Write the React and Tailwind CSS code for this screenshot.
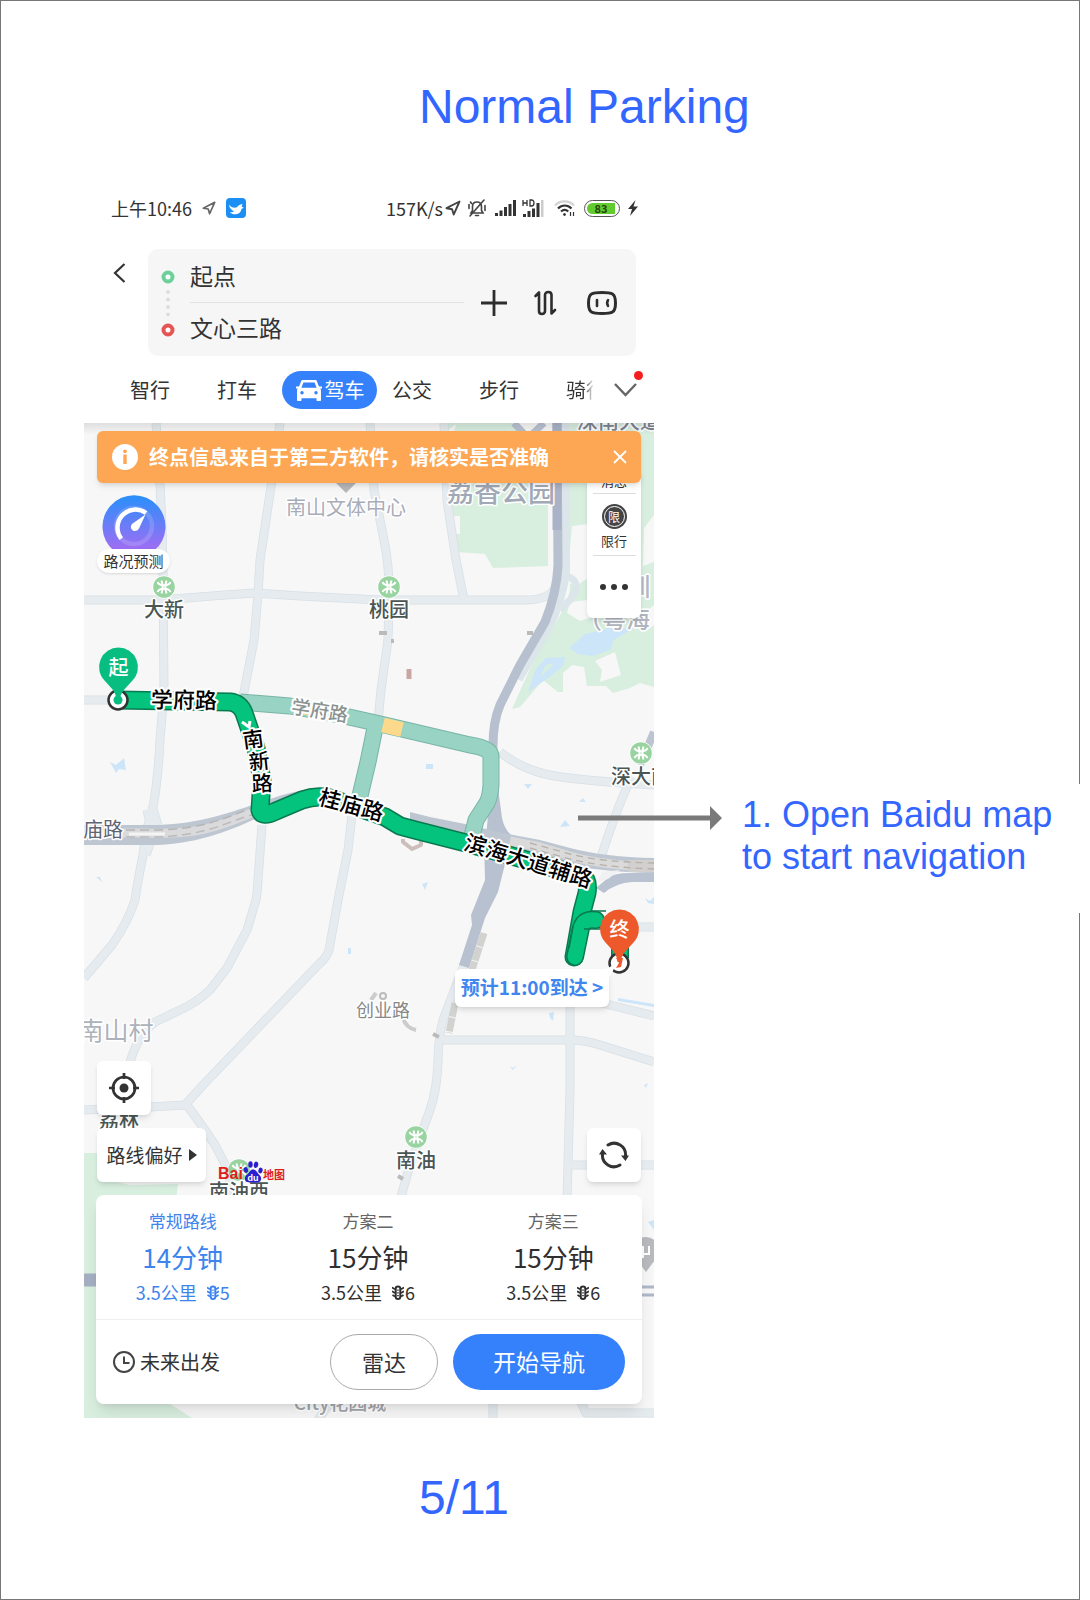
import React from "react";

const CJK = "font-['Noto_Sans_CJK_SC',sans-serif]";

function LocationArrow({ className, color = "#444" }) {
  return (
    <svg className={className} viewBox="0 0 16 16" fill="none" stroke={color} strokeWidth="1.9" strokeLinejoin="round" aria-hidden="true">
      <path d="M14.500 1.500 1.500 8.200l5.600 1 1.600 5.400z" />
    </svg>
  );
}

function StatusBar() {
  return (
    <div className="flex h-9 items-center pl-[27px] pr-4 text-[18px] leading-6 text-[#333]">
      <span>上午10:46</span>
      <LocationArrow className="ml-2.5 h-3.5 w-3.5" color="#666" />
      <svg className="ml-2.5 h-5 w-5" viewBox="0 0 20 20" aria-hidden="true">
        <rect width="20" height="20" rx="4" fill="#1c8ff5" />
        <path d="M3 6.500c2.200 3 5 4 8 2.800.8-1.500 2.500-2.600 5.500-3.300-.5 1.200-.6 2-.8 3 .9.200 1.300.2 2 .1-.6 1-1.300 1.500-2.200 1.900C15 14.500 12.500 16.300 9 16.300c-2.200 0-4-.8-5-2.300 1.600.3 2.800.1 4-.7C5.500 12.300 3.300 10 3 6.500z" fill="#fff" />
      </svg>
      <span className="ml-auto">157K/s</span>
      <LocationArrow className="ml-0.5 h-4 w-4" />
      <svg className="ml-1.5 h-5 w-5" viewBox="0 0 20 20" fill="none" stroke="#444" strokeWidth="1.600" strokeLinecap="round" aria-hidden="true">
        <path d="M4 15h12l-1.500-2.500V8.500C14.500 5.500 12.700 4 10 4S5.500 5.500 5.500 8.500v4zM8.500 17.500h3M17 2 3 18M2 6.500v4M18 7.500v5M3.500 4l1 1.500" />
      </svg>
      <svg className="ml-2 h-4 w-[21px]" viewBox="0 0 21 16" fill="#333" aria-hidden="true">
        <path d="M0 13h3v3H0zM4.500 10.500h3V16h-3zM9 7h3v9H9zM13.500 4h3v12h-3zM18 0h3v16h-3z" />
      </svg>
      <svg className="ml-1.5 h-[18px] w-[22px]" viewBox="0 0 22 18" fill="#333" aria-hidden="true">
        <path d="M1 15h3v3H1zM5.500 12h3v6h-3zM10 9.500h3V18h-3zM14.500 4h3v14h-3z" />
        <path d="M19 1h2.500v17H19z" fill="#ccc" />
        <path d="M1 1v6M5 1v6M1 4h4M8 1v6h1.500c3.300 0 3.300-6 0-6z" fill="none" stroke="#333" strokeWidth="1.300" />
      </svg>
      <svg className="ml-2.5 h-[18px] w-[22px]" viewBox="0 0 22 18" fill="none" stroke="#333" strokeWidth="2.200" aria-hidden="true">
        <path d="M1 6.500C6 1 15 1 20 6.500" stroke="#d3d3d3" />
        <path d="M4 9.500c4-4 9.500-4 13.500 0M7 12.500c2.300-2 5-2 7.300 0" />
        <circle cx="10.500" cy="15.500" r="1" fill="#333" strokeWidth="1" />
        <path d="M16.500 13v4M19.500 13v4" strokeWidth="1.200" />
      </svg>
      <div className="ml-2 flex h-[17px] w-9 items-center rounded-full border-[1.5px] border-[#555] p-0.5">
        <div className="h-full w-[28px] rounded-l-full rounded-r-sm bg-[#62cb2f] text-center text-[11px] font-bold leading-[10px] text-[#25470f]">83</div>
      </div>
      <svg className="ml-2 h-4 w-2.5" viewBox="0 0 10 16" fill="#333" aria-hidden="true">
        <path d="M7.500 0 0 9h4l-2 7 8-9.500H5.500z" />
      </svg>
    </div>
  );
}

function SearchBox() {
  return (
    <div className="mt-[23px] flex pl-[27px] pr-[18px]">
      <button aria-label="返回" className="mt-[14px] h-5 w-[18px]">
        <svg viewBox="0 0 18 20" className="h-full w-full" fill="none" stroke="#333" strokeWidth="2.200" aria-hidden="true">
          <path d="M13.500 1 4 10l9.500 9" />
        </svg>
      </button>
      <div className="ml-[19px] flex h-[107px] flex-1 items-center rounded-[10px] bg-[#f6f6f6] pl-[13px] pr-[18px]">
        <svg viewBox="0 0 14 70" className="h-[70px] w-3.5" fill="none" aria-hidden="true">
          <circle cx="7" cy="9" r="4.500" stroke="#6dd09a" strokeWidth="4" fill="#fff" />
          <g fill="#dcdcdc">
            <circle cx="7" cy="24" r="1.900" />
            <circle cx="7" cy="31.500" r="1.900" />
            <circle cx="7" cy="39" r="1.900" />
            <circle cx="7" cy="46.500" r="1.900" />
          </g>
          <circle cx="7" cy="62" r="4.500" stroke="#e65554" strokeWidth="4" fill="#fff" />
        </svg>
        <div className="ml-[15px] min-w-0 flex-1 text-[#333]">
          <input aria-label="起点" defaultValue="起点" className="block h-[52px] w-full border-b border-[#e2e2e2] bg-transparent pb-0.5 text-[23px] leading-8 outline-none" />
          <input aria-label="终点" defaultValue="文心三路" className="block h-[52px] w-full bg-transparent pb-1 text-[23px] leading-8 outline-none" />
        </div>
        <div className="ml-[17px] flex items-center">
          <button aria-label="添加途经点" className="h-[26px] w-[26px]">
            <svg viewBox="0 0 26 26" stroke="#2d2d2d" strokeWidth="2.800" aria-hidden="true"><path d="M13 0v26M0 13h26" /></svg>
          </button>
          <button aria-label="交换起终点" className="ml-[26px] h-[26px] w-[25px]">
            <svg viewBox="0 0 25 26" fill="none" stroke="#2d2d2d" strokeWidth="2.600" strokeLinecap="round" strokeLinejoin="round" aria-hidden="true">
              <path d="M2.500 6 6 2.500v18.500c0 4 6 4 6 0V5c0-4 6.500-4 6.500 0v18.500l3.500-3.500" />
            </svg>
          </button>
          <button aria-label="语音助手" className="ml-7 h-[26px] w-[32px]">
            <svg viewBox="0 0 32 26" fill="none" stroke="#2d2d2d" strokeLinecap="round" strokeLinejoin="round" aria-hidden="true">
              <path d="M16 2.500c-5 0-8.500.3-10.500 1.500C3 5.500 2.500 8.500 2.500 13S3 20.500 5.500 22c2 1.200 5.500 1.500 10.500 1.500s8.500-.3 10.500-1.500c2.500-1.500 3-4.500 3-9s-.5-7.500-3-9c-2-1.200-5.500-1.500-10.500-1.500z" strokeWidth="3" />
              <path d="M11 10v6M22 10.200Q20.300 13 22 15.800" strokeWidth="2.600" />
            </svg>
          </button>
        </div>
      </div>
    </div>
  );
}

function ModeTabs() {
  return (
    <nav aria-label="出行方式" className="mt-[14px] flex h-[38px] items-center pl-[46px] pt-px text-[20px] leading-7 text-[#333]">
      <button className="w-10 whitespace-nowrap">智行</button>
      <button className="ml-[47px] w-10 whitespace-nowrap">打车</button>
      <button className="ml-[25px] flex h-[38px] w-[95px] items-center justify-center gap-0.5 rounded-full bg-[#3581fb] text-white">
        <svg viewBox="0 0 28 24" className="h-6 w-7" aria-hidden="true">
          <path d="M7.500 3.200h13L23.500 11h-19z" fill="none" stroke="#fff" strokeWidth="2.600" strokeLinejoin="round" />
          <path d="M1 8.500h4.500v2H1zM22.500 8.500H27v2h-4.500zM4.500 10h19c1.700 0 2.500 1 2.500 2.500V22c0 .6-.4 1-1 1h-2.500c-.6 0-1-.4-1-1v-1.800h-15V22c0 .6-.4 1-1 1H3c-.6 0-1-.4-1-1v-9.500C2 11 2.800 10 4.500 10z" fill="#fff" />
          <circle cx="7" cy="14.800" r="1.700" fill="#3581fb" />
          <circle cx="21" cy="14.800" r="1.700" fill="#3581fb" />
        </svg>
        <span>驾车</span>
      </button>
      <button className="ml-[15px] w-10 whitespace-nowrap">公交</button>
      <button className="ml-[47px] w-10 whitespace-nowrap">步行</button>
      <button className="ml-[47px] w-7 overflow-hidden whitespace-nowrap bg-linear-to-r from-[#333] from-60% to-white bg-clip-text text-left text-transparent">骑行</button>
      <button aria-label="更多出行方式" className="relative ml-5 h-4 w-[23px]">
        <svg viewBox="0 0 23 16" fill="none" stroke="#666" strokeWidth="2.400" aria-hidden="true"><path d="m1 2 10.500 11L22 2" /></svg>
        <span className="absolute -right-1.5 -top-[11px] h-[9px] w-[9px] rounded-full bg-[#f51d1d]" />
      </button>
    </nav>
  );
}

function Metro({ x, y }) {
  return (
    <g transform={`translate(${x} ${y})`}>
      <circle r="11.500" fill="#fff" />
      <circle r="10.800" fill="#98d3a0" />
      <g fill="none" stroke="#fff" strokeWidth="2">
        <path d="M-6.500-5C-5-1.500-2-1.800 0-1.800S5-1.500 6.500-5M-6.500 5C-5 1.500-2 1.800 0 1.800S5 1.500 6.500 5" />
        <path d="M-2.500-6.500C-1-2-1 2-2.500 6.500M2.500-6.500C1-2 1 2 2.500 6.500" />
      </g>
    </g>
  );
}

function Label({ x, y, size, color = "#4a5654", weight = 500, rotate = 0, halo = 3, children }) {
  return (
    <text
      transform={`translate(${x} ${y - 2}) rotate(${rotate})`}
      fontSize={size}
      fontWeight={weight}
      fill={color}
      stroke="#fff"
      strokeWidth={halo}
      strokeLinejoin="round"
      paintOrder="stroke"
      textAnchor="middle"
      dominantBaseline="central"
    >
      {children}
    </text>
  );
}

const minorRoads = [
  "M156 423C158 450 162 500 163 570L164 690 160 740Q158 780 153 807L146 832 143 855Q138 880 135 900 128 922 112 945L84 978",
  "M84 600 160 600 225 595 255 593 300 596 380 600 520 600Q552 601 556 585",
  "M280 423 272 480 260 560 258 594 254 640 243 697",
  "M262 825 258 880Q257 895 256 900L247 930 227 968 210 990Q196 1003 180 1010L155 1022Q138 1035 130 1062",
  "M370 423 374 490 384 540Q390 570 389 600L388 640 381 690 378 722",
  "M352 815 348 850 338 900 329 950Q327 957 320 963L203 1085 185 1105",
  "M185 1105 150 1107 84 1110M185 1103Q195 1115 215 1145L229 1172 232 1200",
  "M444 423 447 500 456 560 464 600",
  "M84 700H120",
  "M467 957 443 1020Q438 1040 438 1062 437 1090 430 1110L410 1165 400 1200",
  "M440 1040 570 1040Q585 1040 600 1045L654 1062M570 985V1090L567 1200M568 1165H654M590 1000 654 1016",
  "M500 752Q520 768 545 774T654 785M632 777Q620 800 605 845L600 860M630 927H654",
  "M332 1400 318 1420M493 1400V1420M580 1400 586 1413 654 1413",
  "M146 855 153 835 147 810M158 825 152 806",
];

const parks = [
  "M447 423H512L548 445V500 566L493 568 485 554 456 552 449 510z",
  "M565 423H654V687L640 683 630 688 613 693 606 686H587L584 667 572 665 563 673V692H558L543 680 520 707 512 709 537 653 553 627 566 605 570 590z",
  "M84 1153H97L99 1178 130 1185 178 1184 176 1200H120V1400L164 1400 192 1418H84z",
];

const clearings = "M453 516H460V534H453zM572 526 588 524V578L576 586 567 582 569 560zM644 528 654 515V562L643 566zM570 602 588 600 600 615 580 621 567 613zM595 661 615 652 621 675 600 682 602 670zM570 434 585 428 583 438 573 443zM648 610 654 605V625L645 632zM447 431 456 424 452 440z";

const route = "M118 700 230 702Q240 703 244 713L256 748 262 780 260 810Q262 818 276 811L302 800Q316 795 330 798L385 817 400 826 415 830 470 844 582 876Q589 880 587 893L582 912 574 957";
const routeEnd = "M575 957 581 928Q584 918 596 920";
const altRoute = "M240 702 290 706 340 715 376 723 470 745Q492 748 491 758L491 785Q490 800 485 806L476 820 472 836";
const altBranch = "M376 723 368 762 359 800";

function MapCanvas() {
  return (
    <svg className="block h-full w-full" viewBox="84 423 570 995" preserveAspectRatio="xMidYMid slice" role="img" aria-label="路线地图">
      <rect x="84" y="423" width="570" height="995" fill="#f7f7f7" />
      {parks.map((d) => <path key={d} d={d} fill="#d8eedf" />)}
      <path d={clearings} fill="#f7f7f7" />
      <g fill="#cde5f9">
        <path d="M569 648 585 634 603 630 607 628 634 628 614 640 610 650 592 656 578 654z" />
        <path fillRule="evenodd" d="M528 692 535 670 546 658 565 657 563 666 548 678zM540 677 555 663 546 665z" />
        <path d="M110 762 116 765 124 758 126 770 119 769 116 773zM96 877 102 882 100 877zM426 764H433V769H426zM524 784H532L528 789zM579 802 583 798 586 802zM560 827 565 820 570 826zM422 884 428 882 425 890zM645 898 650 901 654 897V904L648 903zM549 1013 554 1012 553 1021 550 1018zM618 998 654 1004V1007L618 1001zM348 948H351V954H348zM509 1066 513 1068 517 1065 513 1070zM644 1085 648 1083 646 1088zM648 1222 654 1220V1230z" />
      </g>
      <g fill="none" strokeLinejoin="round">
        {minorRoads.map((d) => <path key={d} d={d} stroke="#d8e0e6" strokeWidth="9" />)}
        {minorRoads.map((d) => <path key={d} d={d} stroke="#e5ebee" strokeWidth="7.500" />)}
        <path d="M562 423 563 570Q560 600 545 628L516 678" stroke="#dbe5ea" strokeWidth="14" />
        <path d="M563 575Q585 580 570 600L560 610" stroke="#dbe5ea" strokeWidth="7" />
        <path d="M557 423 558 565Q557 592 545 622L520 665 500 705Q493 722 493 745L492 790Q494 820 501 835" stroke="#b6c0cf" strokeWidth="9" />
        <path d="M557 423V530" stroke="#a9b2c6" strokeWidth="9" />
        <path d="M514 423 528 438 544 423" stroke="#b9c2d2" strokeWidth="7" />
      </g>
      <path d="M491 780H497L502 818Q505 832 515 838H486zM484 840H510L505 864 498 892 485 918 469 968 459 965 472 925 471 915 485 880z" fill="#b7c1cf" />
      <path d="M84 825H145C210 826 245 805 290 793L312 788 295 800C260 815 215 845 150 845H84z" fill="#bec6d2" />
      <path d="M410 812 430 817 465 824 503 833 540 840 570 848Q605 857 654 858V873Q600 872 560 863L410 825z" fill="#bec6d2" />
      <path d="M596 888 608 878Q614 873 630 873H654V882H632Q616 883 604 893z" fill="#b9c2d1" />
      <path d="M602 872 620 870 608 879 598 882z" fill="#f0f1f2" />
      <g fill="none" strokeLinejoin="round">
        <path d="M84 833H145C210 836 230 820 262 809" stroke="#dadadc" strokeWidth="9" />
        <path d="M84 837H146C205 838 230 820 252 815" stroke="#bbb" strokeWidth="1.500" strokeDasharray="9 5" />
        <path d="M84 830H146C205 831 230 815 252 808" stroke="#b5b5b5" strokeWidth="1.500" strokeDasharray="9 5" />
        <path d="M129 834H165" stroke="#f4f4f4" strokeWidth="3" />
        <path d="M510 841 540 847 570 856Q600 865 654 867" stroke="#dadada" strokeWidth="9" />
        <path d="M628 866H654" stroke="#d2d0ce" strokeWidth="12" />
        <path d="M530 843 570 854Q600 862 654 863M530 848 570 859Q600 867 654 869" stroke="#b7b0ab" strokeWidth="1.300" strokeDasharray="7 5" />
        <path d="M654 732 640 765" stroke="#bcc4d2" strokeWidth="8" />
        <path d="M84 1280H100" stroke="#a4afc2" strokeWidth="13" />
        <path d="M640 1287H654M640 1295H654" stroke="#aeb8c8" strokeWidth="3" />
        <path d="M484 933 472 970M455 1003 449 1033" stroke="#d2d2d0" strokeWidth="7" strokeDasharray="14 1" />
        <path d="M403 839V842L412 849 421 845V839" stroke="#cdbdbb" strokeWidth="4" />
        <path d="M371 1000 376 993M403 1018Q406 1028 416 1030" stroke="#ccc" strokeWidth="4" />
        <circle cx="383" cy="996" r="3" stroke="#bbb" strokeWidth="2" />
        <path d="M379 633H387M391 641H394M527 633H533M433 1034 439 1037M398 1176 403 1179" stroke="#bbb" strokeWidth="4" />
        <path d="M409 669V679" stroke="#caa6a3" strokeWidth="5" />
      </g>

      <Label x={619} y={421} size={21} color="#7c8491">深南大道</Label>
      <Label x={501} y={492} size={27} color="#a2a9b6">荔香公园</Label>
      <Label x={346} y={508} size={20} color="#a8adb9" weight={400}>南山文体中心</Label>
      <path d="M335 482Q346 482 357 482L346 493z" fill="#b7b7b9" />
      <Label x={638} y={587} size={25} color="#b3b7c2">圳</Label>
      <Label x={614} y={619} size={24} color="#b0b5c0">（粤海</Label>
      <Metro x={164} y={587} />
      <Label x={164} y={610} size={20}>大新</Label>
      <Metro x={389} y={587} />
      <Label x={389} y={610} size={20}>桃园</Label>
      <Metro x={641} y={753} />
      <Label x={641} y={777} size={20}>深大南</Label>
      <Metro x={416} y={1137} />
      <Label x={416} y={1161} size={20}>南油</Label>
      <Metro x={239} y={1170} />
      <Label x={239} y={1192} size={20}>南油西</Label>
      <Label x={119} y={1121} size={20}>荔林</Label>
      <Label x={383} y={1011} size={18} color="#888" weight={400}>创业路</Label>
      <Label x={116} y={1031} size={25} color="#adb2bb" weight={400}>南山村</Label>
      <Label x={103} y={830} size={20} color="#5d6472" weight={400}>庙路</Label>
      <Label x={340} y={1403} size={19} color="#a3a6ac">City花园城</Label>
      <circle cx="646" cy="1250" r="13" fill="#b8babd" />
      <path d="M634 1256 658 1256 646 1272z" fill="#b8babd" />
      <path d="M643 1246V1258M649 1246V1254H643" stroke="#fff" strokeWidth="2" fill="none" />

      <g fill="none" strokeLinejoin="round">
        <path d={altRoute} stroke="#78b5a6" strokeWidth="17" />
        <path d={altBranch} stroke="#78b5a6" strokeWidth="17" />
        <path d={altRoute} stroke="#99d3c4" strokeWidth="15" />
        <path d={altBranch} stroke="#99d3c4" strokeWidth="15" />
        <path d="M383 725 402 729.500" stroke="#fdd98b" strokeWidth="15" />
        <path d="M302 707 318 710" stroke="#fdd98b" strokeWidth="14" />
        <path d={route} stroke="#087a50" strokeWidth="19" strokeLinecap="round" />
        <path d={route} stroke="#04c37c" strokeWidth="16" strokeLinecap="round" />
        <path d={routeEnd} stroke="#087a50" strokeWidth="18" strokeLinecap="round" />
        <path d={routeEnd} stroke="#04c37c" strokeWidth="15" strokeLinecap="round" />
        <path d="M590 911H606M584 929H604M569 948 573 926" stroke="#087a50" strokeWidth="1.500" />
        <path d="M242 722 249 727 250 721" stroke="#fff" strokeWidth="3" />
        <path d="M620 930V958" stroke="#087a50" strokeWidth="18" />
        <path d="M620 930V958" stroke="#04c37c" strokeWidth="15" />
      </g>

      <Label x={184} y={700} size={22} color="#000" rotate={1} halo={4}>学府路</Label>
      <Label x={320} y={711} size={19} color="#8b9391" rotate={9} halo={4}>学府路</Label>
      <Label x={253} y={740} size={21} color="#000" rotate={-8} halo={4}>南</Label>
      <Label x={259} y={762} size={21} color="#000" rotate={-6} halo={4}>新</Label>
      <Label x={262} y={784} size={21} color="#000" rotate={-3} halo={4}>路</Label>
      <Label x={352} y={805} size={22} color="#000" rotate={15} halo={4}>桂庙路</Label>
      <Label x={529} y={861} size={22} color="#000" rotate={17} halo={4}>滨海大道辅路</Label>

      <circle cx="118" cy="700" r="9.500" fill="#fff" stroke="#333" strokeWidth="2.500" />
      <circle cx="118" cy="700" r="4.500" fill="#08bd80" />
      <path d="M118.500 647.500a19.500 19.500 0 0 1 14 33C127 687 121 691 119.500 700h-3C116 691 110 687 104.500 680.500a19.500 19.500 0 0 1 14-33z" fill="#08bd80" />
      <text x="118.500" y="666" fontSize="20" fontWeight="500" fill="#fff" textAnchor="middle" dominantBaseline="central">起</text>
      <circle cx="619" cy="963" r="9.500" fill="#fff" stroke="#333" strokeWidth="2.500" />
      <path d="M616 958H623L621 967 616 968 619 963z" fill="#f0562c" />
      <path d="M619.500 909.500a19.500 19.500 0 0 1 14 33C628 949 622 953 620.500 962h-3C617 953 611 949 605.500 942.500a19.500 19.500 0 0 1 14-33z" fill="#ee592b" />
      <text x="619.500" y="928" fontSize="20" fontWeight="500" fill="#fff" textAnchor="middle" dominantBaseline="central">终</text>
    </svg>
  );
}

function Notice() {
  return (
    <div role="alert" className="absolute inset-x-[13px] top-2 z-10 flex h-[52px] items-center rounded-md bg-[#fda654] pl-[15px] pr-[14px] text-white shadow-md">
      <svg viewBox="0 0 26 26" className="h-[26px] w-[26px]" aria-hidden="true">
        <circle cx="13" cy="13" r="13" fill="#fff" />
        <path d="M11.300 10.500h3.400V20h-3.400z" fill="#fda654" />
        <circle cx="13" cy="7.300" r="1.900" fill="#fda654" />
      </svg>
      <p className="ml-[11px] whitespace-nowrap text-[20px] font-bold leading-7">终点信息来自于第三方软件，请核实是否准确</p>
      <button aria-label="关闭" className="ml-auto h-3.5 w-3.5">
        <svg viewBox="0 0 14 14" stroke="#fff" strokeWidth="1.800" aria-hidden="true"><path d="M1 1 13 13M13 1 1 13" /></svg>
      </button>
    </div>
  );
}

function ForecastButton() {
  return (
    <button className="absolute left-[13px] top-[72px] flex w-[73px] flex-col items-center">
      <svg viewBox="0 0 64 58" className="h-[58px] w-16" aria-hidden="true">
        <defs>
          <linearGradient id="dial" x1="0" y1="0" x2="0" y2="1">
            <stop offset="0" stopColor="#2890fb" />
            <stop offset="1" stopColor="#a36cf3" />
          </linearGradient>
        </defs>
        <path d="M12 56a31.500 31.500 0 1 1 40 0z" fill="url(#dial)" />
        <circle cx="32" cy="31" r="18" fill="none" stroke="#fff" strokeOpacity=".15" strokeWidth="4.500" />
        <path d="M19.300 43.700A18 18 0 0 1 44 18" fill="none" stroke="#fff" strokeWidth="4.500" />
        <path d="M43.500 19.500 37 33.500c-1.800 3-5.500 3.300-7.200 1s-.8-5 1.200-6.300z" fill="#fff" />
      </svg>
      <span className="-mt-1 w-full whitespace-nowrap rounded-full bg-white text-center text-[15px] leading-6 text-[#333] shadow-sm">路况预测</span>
    </button>
  );
}

function ToolPanel() {
  return (
    <div className="absolute right-[13px] top-[45px] flex h-[150px] w-[54px] flex-col items-center rounded-md bg-white text-[13px] leading-5 text-[#333] shadow-md">
      <button className="h-[26px] w-[43px] border-b border-[#ddd] leading-[20px]">消息</button>
      <button className="flex h-[62px] w-[43px] flex-col items-center border-b border-[#ddd] pt-2.5">
        <span className="flex h-[25px] w-[25px] items-center justify-center rounded-full bg-[#444]">
          <span className="flex h-[21px] w-[21px] items-center justify-center rounded-full border border-white text-[12px] leading-4 text-white">限</span>
        </span>
        <span className="mt-0.5">限行</span>
      </button>
      <button aria-label="更多" className="flex flex-1 items-center gap-[5px]">
        <span className="h-1.5 w-1.5 rounded-full bg-[#333]" />
        <span className="h-1.5 w-1.5 rounded-full bg-[#333]" />
        <span className="h-1.5 w-1.5 rounded-full bg-[#333]" />
      </button>
    </div>
  );
}

function BaiduLogo() {
  return (
    <div className="absolute left-[134px] top-[738px] flex items-end font-bold text-[#de1e1c]">
      <span className="font-['Liberation_Sans',sans-serif] text-[16px] leading-[18px]">Bai</span>
      <svg viewBox="0 0 20 22" className="h-[22px] w-5" aria-hidden="true">
        <g fill="#2a1fd0">
          <ellipse cx="2.800" cy="9" rx="2.200" ry="2.900" transform="rotate(-15 2.800 9)" />
          <ellipse cx="7.500" cy="3.500" rx="2.200" ry="3.200" />
          <ellipse cx="13" cy="3.800" rx="2.200" ry="3.200" transform="rotate(12 13 3.800)" />
          <ellipse cx="17.500" cy="9.500" rx="2.100" ry="2.900" transform="rotate(15 17.500 9.500)" />
          <path d="M10 8.500c3 0 3.500 2.500 5.500 4.500s3 3 2.500 5.500c-.6 3-3 3-8 3s-7.600 0-8-3c-.4-2.500.8-3.800 2.800-5.500S7 8.500 10 8.500z" />
        </g>
        <text x="10" y="19.500" fontSize="9" fontWeight="700" fill="#fff" textAnchor="middle" fontFamily="Liberation Sans, sans-serif">du</text>
      </svg>
      <span className="text-[11px] leading-[18px]">地图</span>
    </div>
  );
}

function TrafficLight() {
  return (
    <svg viewBox="0 0 12 16" className="ml-2.5 mr-px h-4 w-3" fill="none" stroke="currentColor" aria-hidden="true">
      <rect x="3.700" y="1.500" width="4.600" height="12.500" rx="2.300" strokeWidth="2" />
      <path d="M6 4.500v1.200M6 7.200v1.200M6 10v1.200" strokeWidth="1.600" />
      <path d="m0 2.500 3 1.800M0 6.300l3 1.800M.500 10 3 11.500M12 2.500 9 4.300M12 6.300 9 8.100M11.500 10 9 11.500" strokeWidth="1.700" />
    </svg>
  );
}

const routes = [
  { name: "常规路线", time: "14分钟", distance: "3.5公里", lights: 5, tone: "text-[#3d84ec]", nameTone: "text-[#3d84ec]" },
  { name: "方案二", time: "15分钟", distance: "3.5公里", lights: 6, tone: "text-[#2f2f2f]", nameTone: "text-[#666]" },
  { name: "方案三", time: "15分钟", distance: "3.5公里", lights: 6, tone: "text-[#2f2f2f]", nameTone: "text-[#666]" },
];

function RouteCard() {
  return (
    <section aria-label="路线方案" className="absolute inset-x-3 bottom-[14px] rounded-lg bg-white shadow-lg">
      <div className="-ml-1.5 -mr-1 grid grid-cols-3 pb-[13px] pt-[14px]">
        {routes.map((r) => (
          <button key={r.name} className={`flex flex-col items-center ${r.tone}`}>
            <span className={`text-[17px] leading-6 ${r.nameTone}`}>{r.name}</span>
            <span className="mt-1.5 text-[26px] leading-9">{r.time}</span>
            <span className="mt-1 flex items-center text-[18px] leading-[27px]">
              {r.distance}
              <TrafficLight />
              {r.lights}
            </span>
          </button>
        ))}
      </div>
      <div className="flex items-center border-t border-[#f0f0f0] pb-[14px] pl-4 pr-[17px] pt-[14px] text-[#333]">
        <button className="flex items-center gap-1 text-[20px] leading-7">
          <svg viewBox="0 0 24 24" className="h-6 w-6" fill="none" stroke="#444" strokeWidth="2" aria-hidden="true">
            <circle cx="12" cy="12" r="10" />
            <path d="M12 6.500V13h5.500" />
          </svg>
          未来出发
        </button>
        <button className="ml-auto h-14 w-[108px] rounded-full border border-[#aaa] pb-0.5 text-[22px] leading-8">雷达</button>
        <button className="ml-[15px] h-14 w-[172px] rounded-full bg-[#3581fb] pb-0.5 text-[23px] leading-8 text-white">开始导航</button>
      </div>
    </section>
  );
}

function MapArea() {
  return (
    <div className="relative mt-[15px] h-[995px] overflow-hidden">
      <MapCanvas />
      <div className="absolute inset-x-0 top-0 h-3 bg-linear-to-b from-black/10 to-transparent" />
      <Notice />
      <ForecastButton />
      <ToolPanel />
      <button className="absolute left-[371px] top-[546px] h-[38px] w-[154px] whitespace-nowrap rounded-md bg-white pb-0.5 text-[19px] font-bold leading-7 text-[#3f86ef] shadow-md">
        预计11:00到达 &gt;
        <svg viewBox="0 0 20 14" className="absolute -right-2 -top-1.5 h-3.5 w-5" fill="#fff" aria-hidden="true"><path d="M0 7Q12 7 18 0 17 9 12 14L0 13z" /></svg>
      </button>
      <button aria-label="定位" className="absolute left-[13px] top-[638px] flex h-[54px] w-[54px] items-center justify-center rounded-md bg-white shadow-md">
        <svg viewBox="0 0 30 30" className="h-[30px] w-[30px]" fill="none" stroke="#333" strokeWidth="2.700" aria-hidden="true">
          <circle cx="15" cy="15" r="11" />
          <circle cx="15" cy="15" r="4.500" fill="#333" stroke="none" />
          <path d="M15 0v6M15 24v6M0 15h6M24 15h6" />
        </svg>
      </button>
      <button className="absolute left-[13px] top-[705px] flex h-[54px] w-[109px] items-center justify-center gap-1.5 whitespace-nowrap rounded-md bg-white text-[19px] leading-7 text-[#333] shadow-md">
        路线偏好
        <svg viewBox="0 0 8 12" className="h-3 w-2" fill="#333" aria-hidden="true"><path d="M0 0v12l8-6z" /></svg>
      </button>
      <button aria-label="刷新" className="absolute right-[13px] top-[705px] flex h-[54px] w-[54px] items-center justify-center rounded-md bg-white shadow-md">
        <svg viewBox="0 0 30 28" className="h-7 w-[30px]" fill="none" stroke="#333" strokeWidth="3" strokeLinecap="round" aria-hidden="true">
          <path d="M9 4A11.500 11.500 0 0 1 26.500 15M21 24A11.500 11.500 0 0 1 3.500 13" />
          <path d="M22 14.500h8l-3.500 5.500zM8 13.500H0L3.500 8z" fill="#333" stroke="none" />
        </svg>
      </button>
      <BaiduLogo />
      <RouteCard />
    </div>
  );
}

function Callout() {
  return (
    <aside className="relative -ml-[76px] mt-[594px] -mr-0.5 flex flex-1 items-start self-start">
      <svg viewBox="0 0 144 24" className="mt-[22px] h-6 w-36 shrink-0" fill="#7a7a7a" aria-hidden="true">
        <path d="M0 9.500h132V0l12 12-12 12v-9.500H0z" />
      </svg>
      <p className="ml-5 flex-1 bg-white pb-[35px] pt-[10px] text-[36px] leading-[42px] text-[#3366ff]">
        1. Open Baidu map
        <br />
        to start navigation
      </p>
    </aside>
  );
}

export default function App() {
  return (
    <div className="min-h-screen bg-white pr-2.5 font-['Liberation_Sans',Arial,sans-serif]">
      <div className="min-h-[1600px] border border-[#777] bg-white">
        <h1 className="pl-[418px] pt-[78px] text-[48px] leading-[56px] text-[#3366ff]">Normal Parking</h1>
        <main className="mt-[55px] flex pl-[83px]">
          <div className={`w-full max-w-[570px] shrink-0 ${CJK}`}>
            <StatusBar />
            <SearchBox />
            <ModeTabs />
            <MapArea />
          </div>
          <Callout />
        </main>
        <footer className="mt-[52px] pl-[418px] text-[48px] leading-[56px] text-[#3366ff]">5/11</footer>
      </div>
    </div>
  );
}
